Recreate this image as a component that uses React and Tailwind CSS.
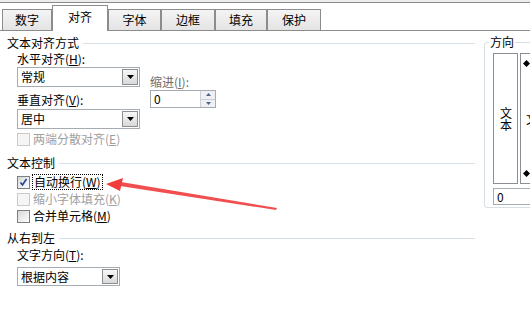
import React from 'react';

const tabs = [
  { label: '数字', w: 'w-[50px]' },
  { label: '对齐', w: 'w-[56px]', active: true },
  { label: '字体', w: 'w-[53px]' },
  { label: '边框', w: 'w-[54px]' },
  { label: '填充', w: 'w-[52px]' },
  { label: '保护', w: 'w-[54px]' },
];

function Heading({ children, className = '' }) {
  return (
    <div className={`flex items-center h-[14px] pl-[7px] ${className}`}>
      <span className="leading-[14px] whitespace-nowrap">{children}</span>
      <div className="flex-1 h-px bg-[#d5dfe5] ml-[4px]" />
    </div>
  );
}

function DropButton() {
  return (
    <div className="w-[16px] h-full border border-[#8b8e93] bg-gradient-to-b from-[#f7f7f7] to-[#d9d9d9] flex items-center justify-center">
      <svg width="7" height="4" viewBox="0 0 7 4">
        <polygon points="0,0 7,0 3.5,4" fill="#000" />
      </svg>
    </div>
  );
}

function Select({ value, className }) {
  return (
    <div className={`flex items-stretch border border-[#a5acb2] bg-white p-px ${className}`}>
      <span className="flex-1 pl-[2px] leading-[16px]">{value}</span>
      <DropButton />
    </div>
  );
}

function CheckBox({ checked, disabled }) {
  return (
    <span
      className={`w-[13px] h-[13px] border flex items-center justify-center shrink-0 ${
        disabled ? 'border-[#cacaca] bg-[#f5f5f5]' : 'border-[#7b8088] bg-gradient-to-br from-[#d8d8d8] to-white'
      }`}
    >
      {checked && (
        <svg width="9" height="9" viewBox="0 0 9 9">
          <polyline points="1.5,4.5 3.5,7 7.5,1" fill="none" stroke="#21409a" strokeWidth="1.6" />
        </svg>
      )}
    </span>
  );
}

export default function App() {
  return (
    <div className="w-[530px] h-[320px] bg-white relative overflow-hidden text-[12px] text-black font-['Noto_Sans_CJK_SC','Liberation_Sans',sans-serif]">
      {/* 上端 */}
      <div className="h-[2px] bg-[#ececec]" />
      <div className="h-px bg-[#8a8a8a]" />
      <div className="h-[6px] bg-white" />

      {/* タブ */}
      <div className="flex items-end h-[22px] pl-[2px] border-b border-[#8c8c8c]">
        {tabs.map((t) =>
          t.active ? (
            <div
              key={t.label}
              className={`${t.w} h-[26px] -mb-px relative z-10 bg-white border border-b-0 border-[#8c8c8c] flex items-start justify-center pt-[4px] leading-[14px]`}
            >
              {t.label}
            </div>
          ) : (
            <div
              key={t.label}
              className={`${t.w} h-[21px] bg-gradient-to-b from-[#f4f4f4] to-[#e4e4e4] border border-b-0 border-[#8c8c8c] flex items-center justify-center leading-[14px]`}
            >
              {t.label}
            </div>
          )
        )}
      </div>

      <div className="flex">
        {/* 左側 */}
        <div className="w-[475px] shrink-0 flex flex-col">
          <Heading className="mt-[5px]">文本对齐方式</Heading>
          <div className="flex pl-[17px] mt-[2px]">
            <div className="w-[123px] flex flex-col">
              <span className="leading-[14px]">水平对齐(<u>H</u>):</span>
              <Select value="常规" className="h-[20px] mt-[1px]" />
              <span className="leading-[14px] mt-[6px]">垂直对齐(<u>V</u>):</span>
              <Select value="居中" className="h-[20px] mt-[2px]" />
            </div>
            <div className="ml-[10px] pt-[23px] flex flex-col">
              <span className="leading-[14px] text-[#6d6d6d]">缩进(<u>I</u>):</span>
              <div className="w-[66px] h-[18px] mt-[1px] border border-[#a5acb2] flex">
                <span className="flex-1 pl-[3px] leading-[16px]">0</span>
                <div className="w-[15px] flex flex-col border-l border-[#c9ced6] bg-[#eef0f4]">
                  <div className="flex-1 flex items-center justify-center border-b border-[#c9ced6]">
                    <svg width="5" height="3" viewBox="0 0 5 3"><polygon points="0,3 5,3 2.5,0" fill="#4c6286" /></svg>
                  </div>
                  <div className="flex-1 flex items-center justify-center">
                    <svg width="5" height="3" viewBox="0 0 5 3"><polygon points="0,0 5,0 2.5,3" fill="#4c6286" /></svg>
                  </div>
                </div>
              </div>
            </div>
          </div>
          <div className="flex items-center gap-[3px] pl-[17px] h-[14px] mt-[3px] text-[#a0a0a0]">
            <CheckBox disabled />
            <span className="leading-[14px]">两端分散对齐(<u>E</u>)</span>
          </div>

          <Heading className="mt-[10px]">文本控制</Heading>
          <div className="flex flex-col gap-px pl-[17px] mt-[4px]">
            <div className="flex items-center gap-[2px] h-[16px]">
              <CheckBox checked />
              <span className="leading-[14px] border border-dotted border-black px-px">自动换行(<u>W</u>)</span>
            </div>
            <div className="flex items-center gap-[3px] h-[16px] text-[#a0a0a0]">
              <CheckBox disabled />
              <span className="leading-[14px]">缩小字体填充(<u>K</u>)</span>
            </div>
            <div className="flex items-center gap-[3px] h-[16px]">
              <CheckBox />
              <span className="leading-[14px]">合并单元格(<u>M</u>)</span>
            </div>
          </div>

          <Heading className="mt-[7px]">从右到左</Heading>
          <div className="flex flex-col pl-[17px] mt-[3px]">
            <span className="leading-[14px]">文字方向(<u>T</u>):</span>
            <Select value="根据内容" className="w-[103px] h-[19px] mt-[5px]" />
          </div>
        </div>

        {/* 方向 */}
        <div className="ml-[9px] mt-[11px] w-[100px] h-[166px] border border-[#d5dfe5] rounded-[3px] relative shrink-0 pt-[10px] pl-[8px]">
          <span className="absolute -top-[8px] left-[4px] bg-white px-px leading-[14px]">方向</span>
          <div className="flex gap-[2px]">
            <div className="w-[25px] h-[131px] border border-[#8a8f96] flex items-center justify-center">
              <span className="[writing-mode:vertical-rl] leading-[14px]">文本</span>
            </div>
            <div className="w-[60px] h-[131px] border border-[#8a8f96] flex flex-col justify-between py-[6px] pl-[2px]">
              <svg width="7" height="7" viewBox="0 0 7 7"><polygon points="3.5,0 7,3.5 3.5,7 0,3.5" fill="#000" /></svg>
              <span className="leading-[12px] pl-[3px]">文</span>
              <svg width="7" height="7" viewBox="0 0 7 7"><polygon points="3.5,0 7,3.5 3.5,7 0,3.5" fill="#000" /></svg>
            </div>
          </div>
          <div className="w-[80px] h-[17px] mt-[4px] border border-[#a5acb2] pl-[3px] leading-[15px]">0</div>
        </div>
      </div>

      {/* 赤い矢印 */}
      <svg className="absolute inset-0 pointer-events-none" width="530" height="320" viewBox="0 0 530 320">
        <polygon points="277,208 276,210 120,186 121,182" fill="#f03c3c" opacity="0.9" />
        <polygon points="106,184 123,178 120,191" fill="#f03c3c" />
      </svg>
    </div>
  );
}
